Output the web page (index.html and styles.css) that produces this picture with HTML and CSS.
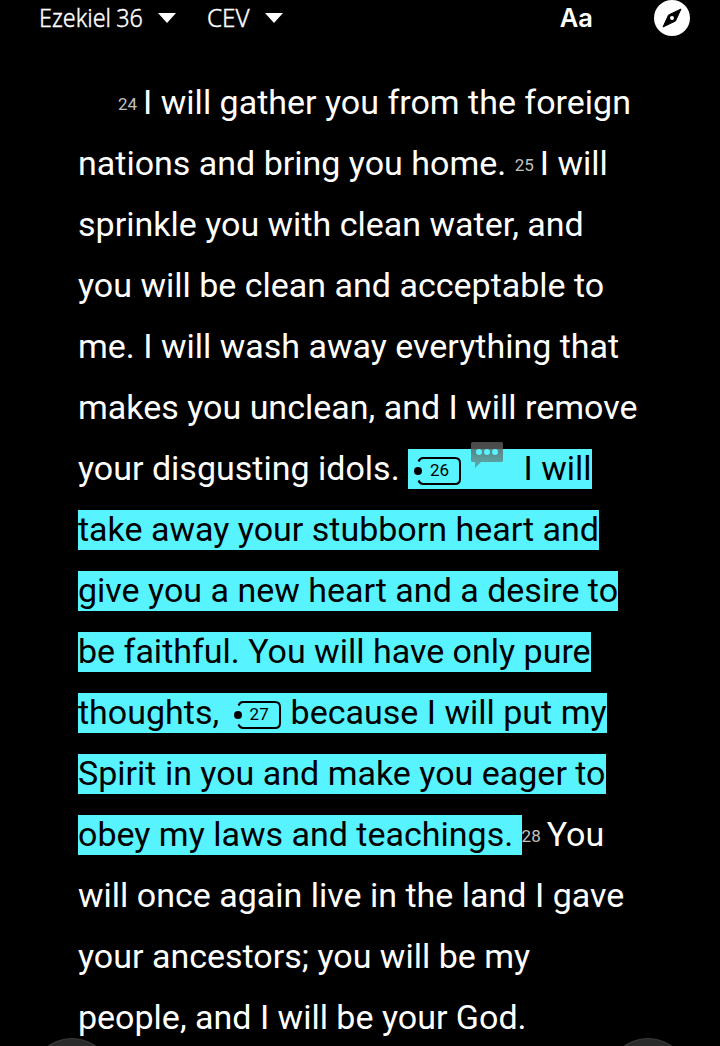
FILE: index.html
```
<!DOCTYPE html>
<html lang="en">
<head>
    <meta charset="UTF-8">
    <meta name="viewport" content="width=device-width, initial-scale=1.0">
    <title>Ezekiel 36 CEV</title>
    <link rel="stylesheet" href="styles.css">
</head>
<body>
    <header>
        <div class="picker book"><span class="picker-label">Ezekiel 36</span><span class="arrow"></span></div>
        <div class="picker version"><span class="picker-label">CEV</span><span class="arrow"></span></div>
        <div class="font-btn">Aa</div>
        <svg class="compass" viewBox="0 0 36 36">
            <circle cx="18" cy="18" r="18" fill="#fff"/>
            <path d="M27 9 L21.5 21 L9 27 L14.5 15 Z" fill="#000" stroke="#000" stroke-linejoin="round"/>
            <circle cx="18" cy="18" r="2" fill="#fff"/>
        </svg>
    </header>

    <main>
        <p class="chapter">
            <span class="num first">24</span>I will gather you from the foreign<br>
            nations and bring you home. <span class="num">25</span>I will<br>
            sprinkle you with clean water, and<br>
            you will be clean and acceptable to<br>
            me. I will wash away everything that<br>
            makes you unclean, and I will remove<br>
            your disgusting idols. <span class="mark"><span class="tag"><svg viewBox="0 0 48 28"><circle cx="5" cy="14" r="4"/><path d="M5.5 4.5 Q7 1 10 1 H42 Q47 1 47 6 V22 Q47 27 42 27 H10 Q7 27 5.5 23.5" fill="none" stroke="#000" stroke-width="2"/></svg>26</span><svg class="note" viewBox="0 0 32 27">
                <defs>
                    <linearGradient id="noteFill" gradientUnits="userSpaceOnUse" x1="0" y1="0" x2="0" y2="27">
                        <stop offset="0" stop-color="#484848"/>
                        <stop offset="0.25" stop-color="#4e4e4e"/>
                        <stop offset="0.27" stop-color="#5c8484"/>
                        <stop offset="1" stop-color="#5cb0b2"/>
                    </linearGradient>
                </defs>
                <path d="M1 0 H31 L32 1 V19 L31 20 H10 L4 26 V20 H1 L0 19 V1 Z" fill="url(#noteFill)"/>
                <g fill="#57f3ff"><circle cx="8" cy="10" r="3"/><circle cx="16" cy="10" r="3"/><circle cx="24" cy="10" r="3"/></g>
            </svg>I will</span><br>
            <span class="mark">take away your stubborn heart and</span><br>
            <span class="mark">give you a new heart and a desire to</span><br>
            <span class="mark">be faithful. You will have only pure</span><br>
            <span class="mark">thoughts, <span class="tag second"><svg viewBox="0 0 48 28"><circle cx="5" cy="14" r="4"/><path d="M5.5 4.5 Q7 1 10 1 H42 Q47 1 47 6 V22 Q47 27 42 27 H10 Q7 27 5.5 23.5" fill="none" stroke="#000" stroke-width="2"/></svg>27</span>because I will put my</span><br>
            <span class="mark">Spirit in you and make you eager to</span><br>
            <span class="mark">obey my laws and teachings. </span><span class="num">28</span>You<br>
            will once again live in the land I gave<br>
            your ancestors; you will be my<br>
            people, and I will be your God.
        </p>
    </main>

    <footer>
        <div class="nav-btn"></div>
        <div class="nav-btn"></div>
    </footer>
</body>
</html>
```
FILE: styles.css
```
* {
    box-sizing: border-box;
}

body {
    margin: 0;
    height: 1046px;
    overflow: hidden;
    background: #000;
    color: #fff;
    font-family: Roboto, sans-serif;
}

header {
    display: flex;
    align-items: center;
    height: 36px;
    padding: 0 30px 0 39px;
}

.picker {
    display: flex;
    align-items: center;
    justify-content: space-between;
    font-family: "Noto Sans", sans-serif;
    font-size: 25px;
    font-weight: 300;
    line-height: 34px;
    white-space: nowrap;
}

.picker-label {
    flex: none;
    width: 110px;
    margin-top: -2px;
    transform: scaleX(0.935);
    transform-origin: left;
    word-spacing: -1px;
    -webkit-text-stroke: 0.4px #fff;
}

.book {
    width: 137px;
}

.version {
    width: 76px;
    margin-left: 31px;
}

.version .picker-label {
    width: 50px;
    transform: scaleX(0.97);
}

.arrow {
    border: 9px solid transparent;
    border-top: 10px solid #fff;
    border-bottom: 0;
}

.font-btn {
    margin-top: -2px;
    margin-left: auto;
    font-family: Inter, sans-serif;
    font-size: 25.5px;
    font-weight: 600;
}

.compass {
    width: 36px;
    height: 36px;
    margin-left: 61px;
}

main {
    height: 976px;
    padding: 36px 0 0 78px;
}

.chapter {
    margin: 0;
    font-size: 34px;
    line-height: 61px;
    white-space: nowrap;
}

.num {
    margin-right: 6px;
    font-size: 17px;
    line-height: 1;
    color: #c2c2c2;
    vertical-align: 4px;
}

.first {
    margin-left: 40px;
}

.mark {
    padding-bottom: 1px;
    background: linear-gradient(#57f3ff, #57f3ff) 0 1px no-repeat;
    color: #000;
    white-space: pre-wrap;
}

.tag {
    display: inline-block;
    position: relative;
    width: 48px;
    height: 28px;
    margin-left: 5px;
    padding-left: 17px;
    font-size: 17px;
    line-height: 26px;
    vertical-align: 4px;
}

.tag svg {
    position: absolute;
    left: 0;
    top: 0;
    width: 48px;
    height: 28px;
}

.second {
    margin-right: 10px;
}

.note {
    width: 32px;
    height: 27px;
    margin: 0 20.5px 0 10px;
    vertical-align: 11px;
}

footer {
    display: flex;
    justify-content: space-between;
    height: 8px;
    padding: 0 30px;
    margin-top: 26px;
    overflow: hidden;
}

.nav-btn {
    flex: none;
    width: 84px;
    height: 84px;
    border: 1px solid #3c3c3c;
    border-radius: 50%;
    background: #2a2a2a;
}
```
